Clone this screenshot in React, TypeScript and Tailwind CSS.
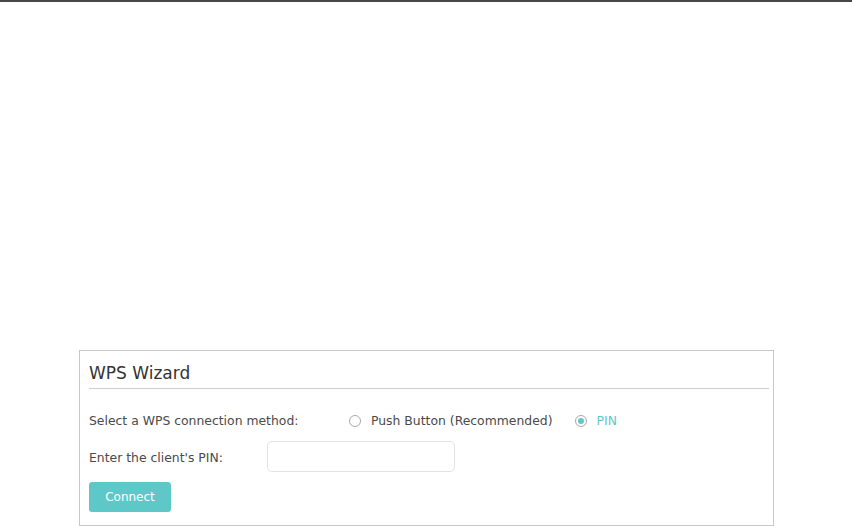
export default function App() {
  return (
    <div
      className="relative h-[526px] w-[852px] overflow-hidden bg-white text-[#4a4a4a]"
      style={{ fontFamily: '"DejaVu Sans", Verdana, sans-serif' }}
    >
      <div className="h-[2px] w-full bg-[#474747]" />
      <div className="ml-[79px] mt-[348px] h-[176px] w-[695px] border border-[#c8c8c8] pl-[9px] pr-[4px]">
        <h2 className="pt-[8px] text-[17px] leading-[28px] text-[#333]">WPS Wizard</h2>
        <div className="mt-px h-px w-full bg-[#cfcfcf]" />
        <div className="mt-[23px] flex items-center text-[12.4px] leading-[18px]">
          <span className="w-[260px]">Select a WPS connection method:</span>
          <label className="flex items-center">
            <span className="h-[12px] w-[12px] rounded-full border border-[#a9a9a9] bg-white" />
            <span className="ml-[10px]">Push Button (Recommended)</span>
          </label>
          <label className="ml-[22px] flex items-center">
            <span className="flex h-[12px] w-[12px] items-center justify-center rounded-full border border-[#a9a9a9] bg-white">
              <span className="h-[6px] w-[6px] rounded-full bg-[#5ec8c9]" />
            </span>
            <span className="ml-[10px] text-[#5ec8c9]">PIN</span>
          </label>
        </div>
        <div className="mt-[11px] flex items-center text-[12.4px]">
          <span className="w-[178px] pt-[3px]">Enter the client's PIN:</span>
          <input className="h-[31px] w-[188px] rounded-[5px] border border-[#e3e3e3] outline-none" />
        </div>
        <button className="mt-[10px] h-[30px] w-[82px] rounded-[3px] bg-[#5ec8c9] text-[12px] text-white">
          Connect
        </button>
      </div>
    </div>
  );
}
